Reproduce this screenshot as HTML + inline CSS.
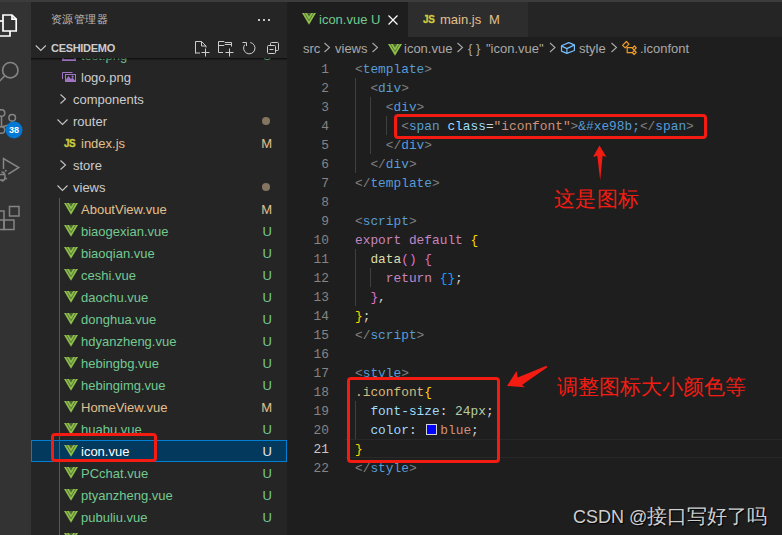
<!DOCTYPE html>
<html><head><meta charset="utf-8">
<style>
*{margin:0;padding:0;box-sizing:border-box}
html,body{width:782px;height:535px;overflow:hidden;background:#1e1e1e;font-family:"Liberation Sans",sans-serif}
.abs{position:absolute}
#title{left:0;top:0;width:782px;height:2px;background:#3c3c3c}
#act{left:0;top:2px;width:31px;height:533px;background:#333333}
#side{left:31px;top:2px;width:256px;height:533px;background:#252526;overflow:hidden}
#ed{left:287px;top:2px;width:495px;height:533px;background:#1e1e1e;overflow:hidden}
#tabs{left:0;top:0;width:495px;height:35px;background:#252526}
.row{position:absolute;left:0;width:256px;height:22px;font-size:13px;line-height:22px;color:#cccccc;white-space:nowrap}
.row .t{position:absolute;top:1px}
.code{position:absolute;left:68px;font-family:"Liberation Mono",monospace;font-size:12.83px;line-height:19px;white-space:pre;color:#d4d4d4}
.ln{position:absolute;left:0;width:42px;text-align:right;font-family:"Liberation Mono",monospace;font-size:12.83px;line-height:19px;color:#858585}
.p{color:#808080}.tg{color:#569cd6}.at{color:#9cdcfe}.st{color:#ce9178}.kw{color:#c586c0}.fn{color:#dcdcaa}
.b1{color:#ffd700}.b2{color:#da70d6}.b3{color:#179fff}.sel{color:#d7ba7d}.num{color:#b5cea8}
.sw{display:inline-block;width:11px;height:11px;border:1px solid #d4d4d4;background:#0000ff;margin:0 3px 0 2px;vertical-align:-1px}
.guide{position:absolute;width:1px;background:#404040}
.red{position:absolute;border:3px solid #f41c12;border-radius:4px}
.U{color:#73c991}.M{color:#e2c08d}

</style></head><body>
<div id="title" class="abs"></div>
<div id="act" class="abs">
  <svg class="abs" style="left:0;top:-2px" width="31" height="240" viewBox="0 0 31 240">
    <!-- explorer -->
    <g fill="none" stroke="#ffffff" stroke-width="1.7" stroke-linejoin="miter">
      <path d="M3 15h9l4.2 4.2V31H3z"/>
      <path d="M12 15v4.2h4.2"/>
      <path d="M-2 21h5"/>
      <path d="M-2 36h12v-5"/>
    </g>
    <!-- search -->
    <g fill="none" stroke="#858585" stroke-width="1.6">
      <circle cx="10.3" cy="70.2" r="7.7"/>
      <path d="M4.8 75.8L-2 82.6"/>
    </g>
    <!-- source control -->
    <g fill="none" stroke="#858585" stroke-width="1.5">
      <circle cx="1.5" cy="113" r="3.3"/>
      <circle cx="12.2" cy="117.8" r="3.3"/>
      <circle cx="1.5" cy="130" r="3.3"/>
      <path d="M1.5 116.3v10.4"/>
      <path d="M12.2 121.1c0 4-5 4.5-10.7 5.6"/>
    </g>
    <circle cx="14" cy="130" r="8.5" fill="#0078d4"/>
    <text x="14" y="133.3" fill="#ffffff" font-size="9" font-family="Liberation Sans" text-anchor="middle" font-weight="bold">38</text>
    <!-- run -->
    <g fill="none" stroke="#858585" stroke-width="1.5">
      <path d="M3.5 169V158.5l15.3 9-10.5 6.6"/>
      <path d="M-2 174.5h6.5M-2 180h6.5M5 171.5l1.5-1.5M5 177.5l1.8 1.8M1.5 172c2.5 0 3.5 2 3.5 4.5S4 181 1.5 181"/>
    </g>
    <!-- extensions -->
    <g fill="none" stroke="#858585" stroke-width="1.5">
      <rect x="9.5" y="206.5" width="9.5" height="9.5"/>
      <path d="M-2 211h6v18.5h10V220H-2"/>
      <path d="M4 220v9.5H-2"/>
    </g>
  </svg>
</div>
<div id="side" class="abs">
  <div class="abs" style="left:19.5px;top:10px;font-size:11px;letter-spacing:0.5px;color:#bbbbbb;line-height:15px">资源管理器</div>
  <div class="abs" style="left:227px;top:17px;width:2px;height:2px;background:#c5c5c5;box-shadow:5px 0 0 #c5c5c5,10px 0 0 #c5c5c5"></div>
  <div id="tree" class="abs" style="left:0;top:0;width:256px;height:533px">
<div class="row" style="top:42px"><svg width="14" height="11" style="position:absolute;left:31px;top:6px"><rect x="1" y="1" width="12" height="9" fill="none" stroke="#a074c4" stroke-width="2"/></svg><span class="t U" style="left:50px">test.png</span><span class="t U" style="right:15px">U</span></div>
<div class="row" style="top:64px"><svg width="16" height="14" viewBox="62 72 16 14" style="position:absolute;left:31px;top:6px"><path d="M62.5 79V72.5h10" fill="none" stroke="#a074c4" stroke-width="1"/><rect x="65.5" y="74.5" width="10" height="7" fill="none" stroke="#a074c4" stroke-width="1"/><path d="M66 81.5v-2l2.5-3.5 2.5 3 1.5-1.5 2.5 3v1z" fill="#a074c4"/><circle cx="72.6" cy="76.6" r="1.1" fill="#a074c4"/></svg><span class="t" style="left:50px;color:#cccccc">logo.png</span></div>
<div class="row" style="top:86px"><svg width="8" height="10" style="position:absolute;left:28px;top:6px"><path d="M1.5 0.5l5 4.5-5 4.5" fill="none" stroke="#c5c5c5" stroke-width="1.1"/></svg><span class="t" style="left:42px;color:#cccccc">components</span></div>
<div class="row" style="top:108px"><svg width="11" height="8" style="position:absolute;left:26px;top:8px"><path d="M0.5 1.5l5 5 5-5" fill="none" stroke="#c5c5c5" stroke-width="1.1"/></svg><span class="t" style="left:42px;color:#cccccc">router</span><span style="position:absolute;left:231px;top:7px;width:8px;height:8px;border-radius:50%;background:#857560"></span></div>
<div class="row" style="top:130px"><span style="position:absolute;left:33px;top:1px;font-size:10px;font-weight:bold;color:#cbcb41;letter-spacing:-0.6px;-webkit-text-stroke:0.3px #cbcb41">JS</span><span class="t" style="left:50px;color:#e2c08d">index.js</span><span class="t" style="right:15px;color:#e2c08d;font-size:13px">M</span></div>
<div class="row" style="top:152px"><svg width="8" height="10" style="position:absolute;left:28px;top:6px"><path d="M1.5 0.5l5 4.5-5 4.5" fill="none" stroke="#c5c5c5" stroke-width="1.1"/></svg><span class="t" style="left:42px;color:#cccccc">store</span></div>
<div class="row" style="top:174px"><svg width="11" height="8" style="position:absolute;left:26px;top:8px"><path d="M0.5 1.5l5 5 5-5" fill="none" stroke="#c5c5c5" stroke-width="1.1"/></svg><span class="t" style="left:42px;color:#cccccc">views</span><span style="position:absolute;left:231px;top:7px;width:8px;height:8px;border-radius:50%;background:#857560"></span></div>
<div class="row" style="top:196px"><svg width="15" height="12" viewBox="0 0 15 12" style="position:absolute;left:33px;top:5px"><path d="M0 0h14L7 11.8z" fill="#8dc149"/><path d="M2.4 0L7 7.6 11.6 0" fill="none" stroke="#252526" stroke-opacity="0.55" stroke-width="0.9"/><path d="M4.8 0h4.4L7 3.8z" fill="#252526" fill-opacity="0.6"/></svg><span class="t" style="left:50px;color:#e2c08d">AboutView.vue</span><span class="t" style="right:15px;color:#e2c08d;font-size:13px">M</span></div>
<div class="row" style="top:218px"><svg width="15" height="12" viewBox="0 0 15 12" style="position:absolute;left:33px;top:5px"><path d="M0 0h14L7 11.8z" fill="#8dc149"/><path d="M2.4 0L7 7.6 11.6 0" fill="none" stroke="#252526" stroke-opacity="0.55" stroke-width="0.9"/><path d="M4.8 0h4.4L7 3.8z" fill="#252526" fill-opacity="0.6"/></svg><span class="t" style="left:50px;color:#73c991">biaogexian.vue</span><span class="t" style="right:15px;color:#73c991;font-size:13px">U</span></div>
<div class="row" style="top:240px"><svg width="15" height="12" viewBox="0 0 15 12" style="position:absolute;left:33px;top:5px"><path d="M0 0h14L7 11.8z" fill="#8dc149"/><path d="M2.4 0L7 7.6 11.6 0" fill="none" stroke="#252526" stroke-opacity="0.55" stroke-width="0.9"/><path d="M4.8 0h4.4L7 3.8z" fill="#252526" fill-opacity="0.6"/></svg><span class="t" style="left:50px;color:#73c991">biaoqian.vue</span><span class="t" style="right:15px;color:#73c991;font-size:13px">U</span></div>
<div class="row" style="top:262px"><svg width="15" height="12" viewBox="0 0 15 12" style="position:absolute;left:33px;top:5px"><path d="M0 0h14L7 11.8z" fill="#8dc149"/><path d="M2.4 0L7 7.6 11.6 0" fill="none" stroke="#252526" stroke-opacity="0.55" stroke-width="0.9"/><path d="M4.8 0h4.4L7 3.8z" fill="#252526" fill-opacity="0.6"/></svg><span class="t" style="left:50px;color:#73c991">ceshi.vue</span><span class="t" style="right:15px;color:#73c991;font-size:13px">U</span></div>
<div class="row" style="top:284px"><svg width="15" height="12" viewBox="0 0 15 12" style="position:absolute;left:33px;top:5px"><path d="M0 0h14L7 11.8z" fill="#8dc149"/><path d="M2.4 0L7 7.6 11.6 0" fill="none" stroke="#252526" stroke-opacity="0.55" stroke-width="0.9"/><path d="M4.8 0h4.4L7 3.8z" fill="#252526" fill-opacity="0.6"/></svg><span class="t" style="left:50px;color:#73c991">daochu.vue</span><span class="t" style="right:15px;color:#73c991;font-size:13px">U</span></div>
<div class="row" style="top:306px"><svg width="15" height="12" viewBox="0 0 15 12" style="position:absolute;left:33px;top:5px"><path d="M0 0h14L7 11.8z" fill="#8dc149"/><path d="M2.4 0L7 7.6 11.6 0" fill="none" stroke="#252526" stroke-opacity="0.55" stroke-width="0.9"/><path d="M4.8 0h4.4L7 3.8z" fill="#252526" fill-opacity="0.6"/></svg><span class="t" style="left:50px;color:#73c991">donghua.vue</span><span class="t" style="right:15px;color:#73c991;font-size:13px">U</span></div>
<div class="row" style="top:328px"><svg width="15" height="12" viewBox="0 0 15 12" style="position:absolute;left:33px;top:5px"><path d="M0 0h14L7 11.8z" fill="#8dc149"/><path d="M2.4 0L7 7.6 11.6 0" fill="none" stroke="#252526" stroke-opacity="0.55" stroke-width="0.9"/><path d="M4.8 0h4.4L7 3.8z" fill="#252526" fill-opacity="0.6"/></svg><span class="t" style="left:50px;color:#73c991">hdyanzheng.vue</span><span class="t" style="right:15px;color:#73c991;font-size:13px">U</span></div>
<div class="row" style="top:350px"><svg width="15" height="12" viewBox="0 0 15 12" style="position:absolute;left:33px;top:5px"><path d="M0 0h14L7 11.8z" fill="#8dc149"/><path d="M2.4 0L7 7.6 11.6 0" fill="none" stroke="#252526" stroke-opacity="0.55" stroke-width="0.9"/><path d="M4.8 0h4.4L7 3.8z" fill="#252526" fill-opacity="0.6"/></svg><span class="t" style="left:50px;color:#73c991">hebingbg.vue</span><span class="t" style="right:15px;color:#73c991;font-size:13px">U</span></div>
<div class="row" style="top:372px"><svg width="15" height="12" viewBox="0 0 15 12" style="position:absolute;left:33px;top:5px"><path d="M0 0h14L7 11.8z" fill="#8dc149"/><path d="M2.4 0L7 7.6 11.6 0" fill="none" stroke="#252526" stroke-opacity="0.55" stroke-width="0.9"/><path d="M4.8 0h4.4L7 3.8z" fill="#252526" fill-opacity="0.6"/></svg><span class="t" style="left:50px;color:#73c991">hebingimg.vue</span><span class="t" style="right:15px;color:#73c991;font-size:13px">U</span></div>
<div class="row" style="top:394px"><svg width="15" height="12" viewBox="0 0 15 12" style="position:absolute;left:33px;top:5px"><path d="M0 0h14L7 11.8z" fill="#8dc149"/><path d="M2.4 0L7 7.6 11.6 0" fill="none" stroke="#252526" stroke-opacity="0.55" stroke-width="0.9"/><path d="M4.8 0h4.4L7 3.8z" fill="#252526" fill-opacity="0.6"/></svg><span class="t" style="left:50px;color:#e2c08d">HomeView.vue</span><span class="t" style="right:15px;color:#e2c08d;font-size:13px">M</span></div>
<div class="row" style="top:416px"><svg width="15" height="12" viewBox="0 0 15 12" style="position:absolute;left:33px;top:5px"><path d="M0 0h14L7 11.8z" fill="#8dc149"/><path d="M2.4 0L7 7.6 11.6 0" fill="none" stroke="#252526" stroke-opacity="0.55" stroke-width="0.9"/><path d="M4.8 0h4.4L7 3.8z" fill="#252526" fill-opacity="0.6"/></svg><span class="t" style="left:50px;color:#73c991">huabu.vue</span><span class="t" style="right:15px;color:#73c991;font-size:13px">U</span></div>
<div class="row" style="top:438px;background:#04395e;outline:1px solid #007fd4;outline-offset:-1px"><svg width="15" height="12" viewBox="0 0 15 12" style="position:absolute;left:33px;top:5px"><path d="M0 0h14L7 11.8z" fill="#8dc149"/><path d="M2.4 0L7 7.6 11.6 0" fill="none" stroke="#252526" stroke-opacity="0.55" stroke-width="0.9"/><path d="M4.8 0h4.4L7 3.8z" fill="#252526" fill-opacity="0.6"/></svg><span class="t" style="left:50px;color:#ffffff">icon.vue</span><span class="t" style="right:15px;color:#e8e8e8;font-size:13px">U</span></div>
<div class="row" style="top:460px"><svg width="15" height="12" viewBox="0 0 15 12" style="position:absolute;left:33px;top:5px"><path d="M0 0h14L7 11.8z" fill="#8dc149"/><path d="M2.4 0L7 7.6 11.6 0" fill="none" stroke="#252526" stroke-opacity="0.55" stroke-width="0.9"/><path d="M4.8 0h4.4L7 3.8z" fill="#252526" fill-opacity="0.6"/></svg><span class="t" style="left:50px;color:#73c991">PCchat.vue</span><span class="t" style="right:15px;color:#73c991;font-size:13px">U</span></div>
<div class="row" style="top:482px"><svg width="15" height="12" viewBox="0 0 15 12" style="position:absolute;left:33px;top:5px"><path d="M0 0h14L7 11.8z" fill="#8dc149"/><path d="M2.4 0L7 7.6 11.6 0" fill="none" stroke="#252526" stroke-opacity="0.55" stroke-width="0.9"/><path d="M4.8 0h4.4L7 3.8z" fill="#252526" fill-opacity="0.6"/></svg><span class="t" style="left:50px;color:#73c991">ptyanzheng.vue</span><span class="t" style="right:15px;color:#73c991;font-size:13px">U</span></div>
<div class="row" style="top:504px"><svg width="15" height="12" viewBox="0 0 15 12" style="position:absolute;left:33px;top:5px"><path d="M0 0h14L7 11.8z" fill="#8dc149"/><path d="M2.4 0L7 7.6 11.6 0" fill="none" stroke="#252526" stroke-opacity="0.55" stroke-width="0.9"/><path d="M4.8 0h4.4L7 3.8z" fill="#252526" fill-opacity="0.6"/></svg><span class="t" style="left:50px;color:#73c991">pubuliu.vue</span><span class="t" style="right:15px;color:#73c991;font-size:13px">U</span></div>
<div class="row" style="top:526px"><svg width="15" height="12" viewBox="0 0 15 12" style="position:absolute;left:33px;top:5px"><path d="M0 0h14L7 11.8z" fill="#8dc149"/><path d="M2.4 0L7 7.6 11.6 0" fill="none" stroke="#252526" stroke-opacity="0.55" stroke-width="0.9"/><path d="M4.8 0h4.4L7 3.8z" fill="#252526" fill-opacity="0.6"/></svg><span class="t" style="left:50px;color:#73c991">shudiliu.vue</span><span class="t" style="right:15px;color:#73c991;font-size:13px">U</span></div>
  </div>
  <div class="guide" style="left:28px;top:196px;height:340px;background:#585858"></div>
  <div class="abs" style="left:0;top:34px;width:256px;height:22px;background:#252526"></div>
  <div class="abs" style="left:0;top:56px;width:256px;height:3px;background:linear-gradient(rgba(0,0,0,0.7),rgba(0,0,0,0.15) 60%,rgba(0,0,0,0))"></div>
  <svg class="abs" style="left:4px;top:42px" width="12" height="8"><path d="M0.8 1.5l5 5 5-5" fill="none" stroke="#c5c5c5" stroke-width="1.1"/></svg>
  <div class="abs" style="left:20px;top:39px;font-size:11px;font-weight:bold;color:#cccccc;line-height:14px;letter-spacing:-0.3px">CESHIDEMO</div>
  <svg class="abs" style="left:129px;top:34px" width="127" height="24" viewBox="160 36 127 24">
    <g fill="none" stroke="#cccccc" stroke-width="1">
      <path d="M195.5 53.5V41.5h6l4.5 4.5v1.5"/><path d="M201.5 41.5v4.5h4.5"/><path d="M195.5 53h4.5"/>
      <path d="M205.5 48.5v8M201.5 52.5h8"/>
      <path d="M218.5 52.5V41.5h5.5l1 1h6.5v4"/><path d="M218.5 45.5h5.5l1-1h6.5"/><path d="M218.5 52.5h4.5"/>
      <path d="M229.5 48.5v8M225.5 52.5h8"/>
      <path d="M250.3 42.5A5.7 5.7 0 1 1 244.8 44.6"/><path d="M242.5 42.5h4v3.5"/>
      <path d="M270.5 45.5v-2a1 1 0 0 1 1-1h6a1 1 0 0 1 1 1v6a1 1 0 0 1-1 1h-2"/>
      <rect x="267.5" y="45.5" width="8" height="8" rx="1"/><path d="M269.5 49.5h4"/>
    </g>
  </svg>
</div>
<div id="ed" class="abs">
  <div id="tabs" class="abs"></div>
  <div class="abs" style="left:0;top:0;width:121px;height:35px;background:#1e1e1e"></div>
  <div class="abs" style="left:121px;top:0;width:120px;height:35px;background:#2d2d2d"></div>
  <svg width="15" height="12" viewBox="0 0 15 12" style="position:absolute;left:15px;top:11px"><path d="M0 0h14L7 11.8z" fill="#8dc149"/><path d="M2.4 0L7 7.6 11.6 0" fill="none" stroke="#252526" stroke-opacity="0.55" stroke-width="0.9"/><path d="M4.8 0h4.4L7 3.8z" fill="#252526" fill-opacity="0.6"/></svg>
  <div class="abs" style="left:32px;top:10px;font-size:13px;line-height:16px;color:#73c991">icon.vue</div>
  <div class="abs" style="left:84px;top:10px;font-size:13px;line-height:16px;color:#73c991">U</div>
  <svg class="abs" style="left:100px;top:12px" width="12" height="12"><path d="M1.5 1.5l9 9M10.5 1.5l-9 9" stroke="#ffffff" stroke-width="1.15"/></svg>
  <div class="abs" style="left:136px;top:11px;font-size:10px;font-weight:bold;line-height:14px;color:#cbcb41;letter-spacing:-0.4px;-webkit-text-stroke:0.3px #cbcb41">JS</div>
  <div class="abs" style="left:153px;top:10px;font-size:13px;line-height:16px;color:#e2c08d">main.js</div>
  <div class="abs" style="left:202px;top:10px;font-size:13px;line-height:16px;color:#e2c08d">M</div>
  <!-- breadcrumbs -->
  <div class="abs" style="left:16px;top:39px;font-size:13px;line-height:16px;color:#a9a9a9;white-space:nowrap">src</div>
  <div class="abs" style="left:48px;top:39px;font-size:13px;line-height:16px;color:#a9a9a9;white-space:nowrap">views</div>
  <div class="abs" style="left:117px;top:39px;font-size:13px;line-height:16px;color:#a9a9a9;white-space:nowrap">icon.vue</div>
  <div class="abs" style="left:181px;top:39px;font-size:13px;line-height:16px;color:#a9a9a9;white-space:nowrap">{ }</div>
  <div class="abs" style="left:199px;top:39px;font-size:13px;line-height:16px;color:#a9a9a9;white-space:nowrap">"icon.vue"</div>
  <div class="abs" style="left:292px;top:39px;font-size:13px;line-height:16px;color:#a9a9a9;white-space:nowrap">style</div>
  <div class="abs" style="left:353px;top:39px;font-size:13px;line-height:16px;color:#a9a9a9;white-space:nowrap">.iconfont</div>
  <svg class="abs" style="left:0;top:36px" width="495" height="22" viewBox="287 38 495 22">
    <g fill="none" stroke="#a9a9a9" stroke-width="1.1">
      <path d="M324.5 43l5 4.5-5 4.5"/><path d="M372.5 43l5 4.5-5 4.5"/>
      <path d="M457.5 43l5 4.5-5 4.5"/><path d="M550 43l5 4.5-5 4.5"/><path d="M611.5 43l5 4.5-5 4.5"/>
    </g>
    <g fill="none" stroke="#75beff" stroke-width="1.2" stroke-linejoin="round">
      <path d="M568.8 42.6L574.4 44.9V50.5L566.9 53.4 561.5 51.1V45.8z"/><path d="M561.7 46.1L566.9 48.6 574.2 45.1M566.9 48.6V53.3"/>
    </g>
    <g fill="none" stroke="#ee9d28" stroke-width="1.2" stroke-linejoin="round">
      <path d="M622.6 45.3l3.8-3.8 2.6 2.6-3.8 3.8z"/><path d="M632.3 48.2l2.2-2.2 1.8 1.8-2.2 2.2z"/><path d="M632.3 52.7l2.2-2.2 1.8 1.8-2.2 2.2z"/>
      <path d="M627.2 46.8v5.9h5.3M627.2 47.6h5.3"/>
    </g>
  </svg>
  <svg width="15" height="12" viewBox="0 0 15 12" style="position:absolute;left:101px;top:42px"><path d="M0 0h14L7 11.8z" fill="#8dc149"/><path d="M2.4 0L7 7.6 11.6 0" fill="none" stroke="#252526" stroke-opacity="0.55" stroke-width="0.9"/><path d="M4.8 0h4.4L7 3.8z" fill="#252526" fill-opacity="0.6"/></svg>
  <!-- indent guides -->
  <div class="guide" style="left:68px;top:76px;height:95px"></div>
  <div class="guide" style="left:83px;top:95px;height:57px"></div>
  <div class="guide" style="left:99px;top:114px;height:19px"></div>
  <div class="guide" style="left:68px;top:247px;height:57px"></div>
  <div class="guide" style="left:83px;top:266px;height:19px"></div>
  <div class="guide" style="left:68px;top:399px;height:38px"></div>
  <div class="abs" style="left:58px;top:437px;width:437px;height:19px;border-top:1px solid #282828;border-bottom:1px solid #282828"></div>
<div class="ln" style="top:58px;color:#858585">1</div>
<div class="code" style="top:58px"><span class="p">&lt;</span><span class="tg">template</span><span class="p">&gt;</span></div>
<div class="ln" style="top:77px;color:#858585">2</div>
<div class="code" style="top:77px">  <span class="p">&lt;</span><span class="tg">div</span><span class="p">&gt;</span></div>
<div class="ln" style="top:96px;color:#858585">3</div>
<div class="code" style="top:96px">    <span class="p">&lt;</span><span class="tg">div</span><span class="p">&gt;</span></div>
<div class="ln" style="top:115px;color:#858585">4</div>
<div class="code" style="top:115px">      <span class="p">&lt;</span><span class="tg">span</span> <span class="at">class</span>=<span class="st">&quot;iconfont&quot;</span><span class="p">&gt;</span><span class="tg">&amp;#xe98b;</span><span class="p">&lt;/</span><span class="tg">span</span><span class="p">&gt;</span></div>
<div class="ln" style="top:134px;color:#858585">5</div>
<div class="code" style="top:134px">    <span class="p">&lt;/</span><span class="tg">div</span><span class="p">&gt;</span></div>
<div class="ln" style="top:153px;color:#858585">6</div>
<div class="code" style="top:153px">  <span class="p">&lt;/</span><span class="tg">div</span><span class="p">&gt;</span></div>
<div class="ln" style="top:172px;color:#858585">7</div>
<div class="code" style="top:172px"><span class="p">&lt;/</span><span class="tg">template</span><span class="p">&gt;</span></div>
<div class="ln" style="top:191px;color:#858585">8</div>
<div class="code" style="top:191px"></div>
<div class="ln" style="top:210px;color:#858585">9</div>
<div class="code" style="top:210px"><span class="p">&lt;</span><span class="tg">script</span><span class="p">&gt;</span></div>
<div class="ln" style="top:229px;color:#858585">10</div>
<div class="code" style="top:229px"><span class="kw">export</span> <span class="kw">default</span> <span class="b1">{</span></div>
<div class="ln" style="top:248px;color:#858585">11</div>
<div class="code" style="top:248px">  <span class="fn">data</span><span class="b2">()</span> <span class="b2">{</span></div>
<div class="ln" style="top:267px;color:#858585">12</div>
<div class="code" style="top:267px">    <span class="kw">return</span> <span class="b3">{}</span>;</div>
<div class="ln" style="top:286px;color:#858585">13</div>
<div class="code" style="top:286px">  <span class="b2">}</span>,</div>
<div class="ln" style="top:305px;color:#858585">14</div>
<div class="code" style="top:305px"><span class="b1">}</span>;</div>
<div class="ln" style="top:324px;color:#858585">15</div>
<div class="code" style="top:324px"><span class="p">&lt;/</span><span class="tg">script</span><span class="p">&gt;</span></div>
<div class="ln" style="top:343px;color:#858585">16</div>
<div class="code" style="top:343px"></div>
<div class="ln" style="top:362px;color:#858585">17</div>
<div class="code" style="top:362px"><span class="p">&lt;</span><span class="tg">style</span><span class="p">&gt;</span></div>
<div class="ln" style="top:381px;color:#858585">18</div>
<div class="code" style="top:381px"><span class="sel">.iconfont</span><span class="b1">{</span></div>
<div class="ln" style="top:400px;color:#858585">19</div>
<div class="code" style="top:400px">  <span class="at">font-size</span>: <span class="num">24px</span>;</div>
<div class="ln" style="top:419px;color:#858585">20</div>
<div class="code" style="top:419px">  <span class="at">color</span>: <span class="sw"></span><span class="st">blue</span>;</div>
<div class="ln" style="top:438px;color:#c6c6c6">21</div>
<div class="code" style="top:438px"><span class="b1">}</span></div>
<div class="ln" style="top:457px;color:#858585">22</div>
<div class="code" style="top:457px"><span class="p">&lt;/</span><span class="tg">style</span><span class="p">&gt;</span></div>
  <!-- annotations -->
  <div class="red" style="left:107px;top:111.5px;width:313px;height:25.5px"></div>
  <div class="red" style="left:60px;top:375px;width:153px;height:86px"></div>
  <svg class="abs" style="left:0;top:0" width="495" height="533" viewBox="287 2 495 533">
    <path d="M599.5 145.5L593 157l4.3-1.3 2.9 24.5 2.4-24.5 3.8 1.3z" fill="#f41c12"/>
    <path d="M507 386l9.5-15 1.2 6.5 28.8-11.8 0.8 1.5-25.3 17.8 3 2.2z" fill="#f41c12"/>
  </svg>
  <div class="abs" style="left:267px;top:183px;font-size:21px;letter-spacing:0.4px;line-height:28px;color:#f41c12;white-space:nowrap">这是图标</div>
  <div class="abs" style="left:270px;top:371px;font-size:21px;line-height:28px;color:#f41c12;white-space:nowrap">调整图标大小颜色等</div>
  <div class="abs" style="left:286px;top:502px;font-size:18px;line-height:24px;color:#cfcfcf;white-space:nowrap;text-shadow:1px 1px 1px #000">CSDN @<span style="font-size:20px">接口写好了吗</span></div>
</div>
<div class="red" style="left:51px;top:433px;width:106px;height:29px"></div>

</body></html>
